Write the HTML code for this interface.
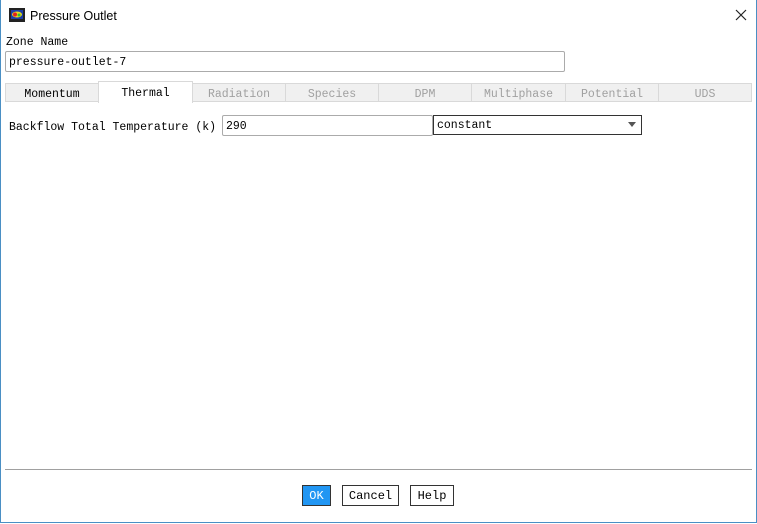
<!DOCTYPE html>
<html><head><style>
body{margin:0;width:757px;height:524px;background:#fff;position:relative;overflow:hidden;font-family:"Liberation Mono",monospace;font-size:11.5px;}
.win{position:absolute;left:0;top:0;width:755px;height:522px;border:1px solid #4a8fc4;border-top:none;}
.a{position:absolute;}
.tab{position:absolute;top:83px;height:19px;background:#f0f0f0;border:1px solid #d9d9d9;box-sizing:border-box;text-align:center;line-height:21px;color:#a0a0a0;}
.inp{position:absolute;border:1px solid #ababab;border-radius:2px;box-sizing:border-box;background:#fff;padding-left:3px;line-height:21px;}
.btn{position:absolute;top:485px;height:21px;box-sizing:border-box;border:1px solid #333;background:#fff;text-align:center;line-height:20px;font-family:"Liberation Mono",monospace;font-size:12px;}
</style></head><body>
<div class="win"></div>
<svg class="a" style="left:9px;top:8px" width="16" height="14"><rect width="16" height="14" fill="#222"/><rect x="2" y="2" width="12" height="9" fill="#1c3ea8"/><ellipse cx="8" cy="6.5" rx="5" ry="3" fill="#e8d820"/><circle cx="6" cy="6.5" r="2" fill="#e02020"/><circle cx="10" cy="7" r="1.5" fill="#30c030"/></svg>
<div class="a" style="left:30px;top:9px;font-family:'Liberation Sans',sans-serif;font-size:12.5px">Pressure Outlet</div>
<svg class="a" style="left:735px;top:9px" width="12" height="12"><path d="M1 1L11 11M11 1L1 11" stroke="#222" stroke-width="1.2"/></svg>
<div class="a" style="left:6px;top:36px">Zone Name</div>
<div class="inp" style="left:5px;top:51px;width:560px;height:21px;">pressure-outlet-7</div>
<div class="tab" style="left:5px;width:94px;color:#000">Momentum</div>
<div class="tab" style="left:98px;top:81px;height:22px;width:95px;background:#fff;border-bottom:none;color:#000;line-height:24px;z-index:2">Thermal</div>
<div class="tab" style="left:192px;width:94px">Radiation</div>
<div class="tab" style="left:285px;width:94px">Species</div>
<div class="tab" style="left:378px;width:94px">DPM</div>
<div class="tab" style="left:471px;width:95px">Multiphase</div>
<div class="tab" style="left:565px;width:94px">Potential</div>
<div class="tab" style="left:658px;width:94px">UDS</div>
<div class="a" style="left:9px;top:121px">Backflow Total Temperature (k)</div>
<div class="inp" style="left:222px;top:115px;width:211px;height:21px;">290</div>
<div class="a" style="left:433px;top:115px;width:209px;height:20px;border:1px solid #333;box-sizing:border-box;padding-left:3px;line-height:20px;">constant</div>
<svg class="a" style="left:628px;top:122px" width="10" height="6"><path d="M0 0H8L4 5Z" fill="#555"/></svg>
<div class="a" style="left:5px;top:469px;width:747px;height:1px;background:#a0a0a0"></div>
<div class="btn" style="left:302px;width:29px;background:#2196f3;color:#fff">OK</div>
<div class="btn" style="left:342px;width:57px">Cancel</div>
<div class="btn" style="left:410px;width:44px">Help</div>
</body></html>
